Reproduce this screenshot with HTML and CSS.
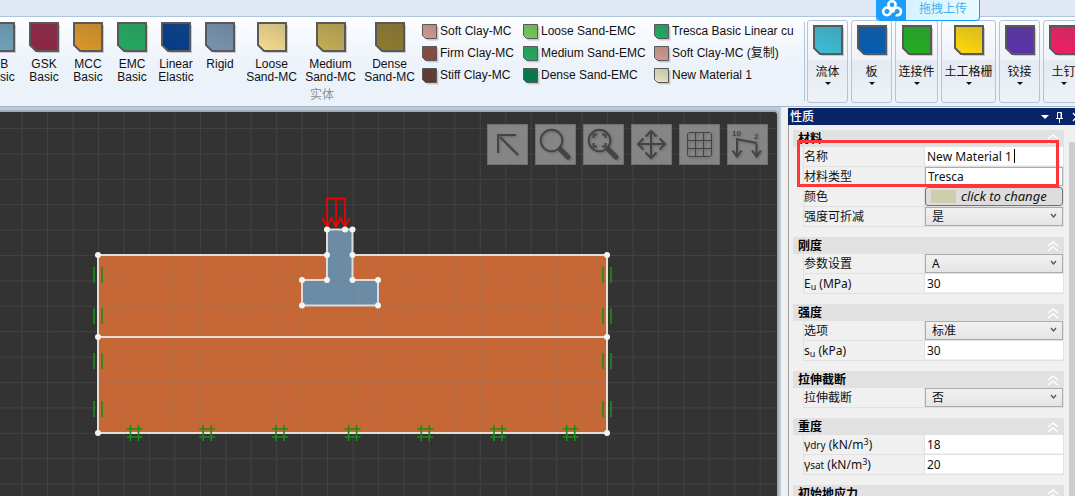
FILE: index.html
```html
<!DOCTYPE html>
<html lang="zh-CN">
<head>
<meta charset="utf-8">
<title>材料性质</title>
<link rel="stylesheet" href="styles.css">
</head>
<body>
<div class="strip"></div>
<header class="ribbon" id="ribbon"></header>
<button class="upload" type="button">
  <span class="upload-logo"><svg width="22" height="18" viewBox="0 0 22 18" fill="none" stroke="#fff" stroke-width="2.600"><circle cx="11" cy="4.800" r="3.600"/><circle cx="6" cy="11.400" r="3.800"/><path d="M12.500 12.500a3.800 3.800 0 1 1 2.200 2.500M8 14.500l5-6"/></svg></span>
  <span class="upload-text">拖拽上传</span>
</button>
<main class="work">
  <section class="canvas">
    <svg class="drawing" width="100%" height="100%" id="drawing"></svg>
    <div class="tools">
      <button class="tool" type="button" aria-label="选择"><svg viewBox="0 0 41 41"><path d="M11 29V11h18M13 13l18 18"/></svg></button>
      <button class="tool" type="button" aria-label="缩放"><svg viewBox="0 0 41 41"><circle cx="16.500" cy="16.500" r="10.800"/><path class="thick" d="M25 25l8 8"/></svg></button>
      <button class="tool" type="button" aria-label="全部显示"><svg viewBox="0 0 41 41"><circle cx="16.500" cy="16.500" r="10.800"/><path d="M10.500 14v-3.500H14M19 10.500h3.500V14M22.500 19v3.500H19M14 22.500h-3.500V19"/><path class="thick" d="M25 25l8 8"/></svg></button>
      <button class="tool" type="button" aria-label="平移"><svg viewBox="0 0 41 41"><path d="M20 7v27M7 20h27M14.500 12.500L20 7l5.500 5.500M14.500 28.500L20 34l5.500-5.500M12.500 14.500L7 20l5.500 5.500M28.500 14.500L34 20l-5.500 5.500"/></svg></button>
      <button class="tool" type="button" aria-label="网格"><svg viewBox="0 0 41 41"><path class="thin" d="M10 8.500h21l1.500 1.500v21L31 32.500H10L8.500 31V10zM16.500 8.500v24M24.500 8.500v24M8.500 16.500h24M8.500 24.500h24"/></svg></button>
      <button class="tool" type="button" aria-label="荷载"><svg viewBox="0 0 41 41"><path d="M9 15l21 4M10 16v16M5.500 26.500l4.500 6 4.500-6M29.500 20v12M25 26.500l4.500 6 4.500-6"/><text x="5" y="12">10</text><text x="27" y="15">2</text></svg></button>
    </div>
  </section>
  <aside class="panel">
    <div class="title"><h1>性质</h1>
      <svg width="42" height="14" viewBox="0 0 42 14" fill="none" stroke="#fff"><path d="M4 5h8l-4 4z" fill="#fff" stroke="none"/><path d="M20.500 2.500h4v6h-4zM24 2.500v6M19 8.500h7M22.500 9v4"/><path d="M36 3l7 8M43 3l-7 8" stroke-width="1.400"/></svg>
    </div>
    <div class="panel-body">
      <form class="props" id="props"></form>
      <div class="scroll"><div class="thumb"></div></div>
      <div class="mark"></div>
    </div>
  </aside>
</main>
<script src="app.js"></script>
</body>
</html>
```
FILE: styles.css
```css
* { box-sizing: border-box; }
body { margin: 0; height: 100vh; display: flex; flex-direction: column; overflow: hidden; background: #b6cce6; font: 12px/13px "Liberation Sans", "Noto Sans CJK SC", sans-serif; color: #111; }
button, input, select { font: inherit; color: inherit; margin: 0; }
button { border: 0; padding: 0; background: none; }
.strip { flex: none; height: 16px; background: #dfe8f4; }
.ribbon { flex: none; display: flex; height: 91px; border-top: 1px solid #b0c6de; border-bottom: 1px solid #a6b5c6; background: linear-gradient(#fdfeff, #ecf2fa 55%, #ecf2fa); }
.solid { flex: none; margin: 5px 0; margin-left: -160px; width: 965px; padding-left: 138px; border-right: 1px solid #b4c6dc; }
.row { display: flex; height: 66px; }
.big { flex: none; display: flex; flex-direction: column; align-items: center; gap: 6px; width: 44px; }
.big.wide { width: 59px; }
.big svg, .small svg, .cat svg { display: block; overflow: visible; flex: none; }
.list { display: grid; grid-template-columns: 101px 131px auto; grid-auto-rows: 22px; align-items: start; margin-left: 3px; }
.small { display: flex; gap: 3px; align-items: center; white-space: nowrap; line-height: 18px; height: 18px; }
.caption { margin-left: -138px; text-align: center; color: #8a8f96; line-height: 14px; }
.cats { display: flex; gap: 3px; margin: 3px 0 3px 2px; }
.cat { flex: none; display: flex; flex-direction: column; align-items: center; justify-content: flex-start; width: 41px; padding-top: 4px; border: 1px solid #b2c5dc; border-radius: 3px; background: linear-gradient(#fafcfe, #eef2f8 48%, #e5eaf2 49%, #edf2f8); white-space: nowrap; }
.cat span { margin-top: 9px; line-height: 16px; }
.cat i { margin-top: 2px; border: 3px solid transparent; border-top-color: #111; border-bottom: 0; }
.w43 { width: 43px; }
.w55 { width: 55px; }
.upload { position: absolute; left: 876px; top: 0; display: flex; height: 21px; border: 1px solid #1c9dfd; border-top: 0; border-radius: 0 0 4px 4px; overflow: hidden; background: linear-gradient(90deg, #cdefff, #e6fbff); }
.upload-logo { width: 29px; height: 20px; padding: 0 3px; background: #1c9dfd; }
.upload-text { padding: 0 12px 0 13px; line-height: 18px; color: #4aaef2; }
.work { flex: 1; min-height: 0; display: grid; grid-template-columns: 1fr 296px; }
.canvas { position: relative; margin-top: 3px; border: solid #ababab; border-width: 2px 2px 0 0; border-radius: 0 5px 0 0; background: #333; overflow: hidden; }
.drawing { display: block; }
.tools { position: absolute; right: 9px; top: 12px; display: flex; gap: 7px; }
.tool { width: 41px; height: 41px; background: rgba(148, 148, 148, .85); border: 1px solid #707070; }
.tool svg { display: block; margin: -1px; width: 41px; height: 41px; fill: none; stroke: #444; stroke-width: 2; filter: drop-shadow(1px 1px 1px #666); }
.tool .thick { stroke-width: 5; stroke-linecap: round; }
.tool .thin { stroke-width: 1; }
.tool text { fill: #444; stroke: none; font: bold 8px "Liberation Sans", sans-serif; }
.panel { display: flex; flex-direction: column; margin-left: 2px; padding: 1px 0 0 7px; background: #f0f0f0; font-family: "Noto Sans", "Noto Sans CJK SC", sans-serif; min-height: 0; }
.title { flex: none; display: flex; justify-content: space-between; align-items: center; height: 17px; padding-left: 2px; background: #0a246a; color: #fff; overflow: hidden; }
.title h1 { margin: 0; font-size: 12px; line-height: 16px; font-weight: 500; }
.title svg { flex: none; margin-right: -4px; }
.panel-body { position: relative; flex: 1; min-height: 0; display: flex; gap: 5px; border-left: 1px solid #a0a0a0; overflow: hidden; }
.props { flex: 1; padding: 5px 0 0 4px; }
.group { margin: 0 0 10px; padding: 0; border: 0; }
.head { display: flex; justify-content: space-between; align-items: center; height: 17px; padding: 0 5px; background: #e1e1e1; color: #000; font-weight: bold; }
.head h2 { margin: 0; font-size: 12px; line-height: 17px; }
.prop { display: grid; grid-template-columns: 121px 1fr; height: 20px; margin-left: 10px; border: solid #e1e1e1; border-width: 0 1px 1px; }
.prop label { line-height: 20px; white-space: nowrap; border-right: 1px solid #e1e1e1; }
.prop sub { font-size: 9px; line-height: 0; vertical-align: -2px; }
.prop sub.base { font-size: 10px; vertical-align: baseline; }
.prop sup { font-size: 9px; line-height: 0; vertical-align: 4px; }
.prop input { width: 100%; min-width: 0; height: 18px; border: 0; padding: 0 2px; background: #fff; outline: none; }
.prop input.boxed { height: 19px; border: 1px solid #ababab; }
.edit { position: relative; }
.edit input { display: block; }
.caret { position: absolute; left: 89px; top: 2px; width: 1px; height: 14px; background: #000; }
.pick { position: relative; }
.pick select { display: block; width: 100%; height: 19px; appearance: none; border: 1px solid #acacac; border-radius: 0; padding: 0 6px; line-height: 16px; background: linear-gradient(#f1f1f1, #e5e5e5); }
.pick svg { position: absolute; right: 6px; top: 6px; pointer-events: none; }
.color { display: flex; align-items: center; gap: 5px; height: 19px; padding: 0 5px; border: 1px solid #707070; border-radius: 3px; background: #ddd; font-size: 13px; font-style: italic; white-space: nowrap; }
.color span { width: 25px; height: 13px; background: #d0cdac; }
.scroll { width: 6px; padding-top: 17px; background: #f0f0f0; }
.thumb { height: 100%; background: #cdcdcd; }
.mark { position: absolute; left: 8px; top: 15px; width: 262px; height: 47px; border: 3px solid #fd3737; pointer-events: none; }
```
FILE: app.js
```js
let seq = 0;
function swatch(size, color) {
  const id = "shade" + seq++;
  const cut = size > 20 ? 6 : 3;
  const w = size > 20 ? 2 : 1;
  const a = w / 2, b = size - w / 2;
  const shape = `M${a} ${a}H${b}V${b}H${a + cut}L${a} ${b - cut}z`;
  return `<svg width="${size}" height="${size}" aria-hidden="true"><defs><linearGradient id="${id}" x1=".7" y1="0" x2=".3" y2="1"><stop offset="0" stop-color="#555" stop-opacity=".22"/><stop offset="1" stop-color="#555" stop-opacity="0"/></linearGradient></defs><path d="${shape}" transform="translate(2 2)" fill="#c9c9cd"/><path d="${shape}" fill="${color}"/><path d="${shape}" fill="url(#${id})" stroke="#595959" stroke-width="${w}"/></svg>`;
}

const bigs = [["HB<br>Basic", "#6fa3be"], ["GSK<br>Basic", "#8f2444"], ["MCC<br>Basic", "#dc9626"], ["EMC<br>Basic", "#20aa60"], ["Linear<br>Elastic", "#003c8c"], ["Rigid", "#7593b0"],
  ["Loose<br>Sand-MC", "#f2da8c", 1], ["Medium<br>Sand-MC", "#c4ac52", 1], ["Dense<br>Sand-MC", "#8e7a2c", 1]];
const smalls = [["Soft Clay-MC", "#d19990"], ["Loose Sand-EMC", "#78c856"], ["Tresca Basic Linear cu", "#20aa60"],
  ["Firm Clay-MC", "#8a4c40"], ["Medium Sand-EMC", "#20aa60"], ["Soft Clay-MC (复制)", "#d19990"],
  ["Stiff Clay-MC", "#623830"], ["Dense Sand-EMC", "#007c4a"], ["New Material 1", "#e6e2c0"]];
const cats = [["流体", "#3cbcd6", ""], ["板", "#005cb4", ""], ["连接件", "#20b020", "w43"], ["土工格栅", "#ffd80c", "w55"], ["铰接", "#5a30ac", ""], ["土钉", "#f01e64", ""]];

document.getElementById("ribbon").innerHTML =
  `<div class="solid"><div class="row">` +
  bigs.map(b => `<button type="button" class="big${b[2] ? " wide" : ""}">${swatch(30, b[1])}<span>${b[0]}</span></button>`).join("") +
  `<div class="list">` + smalls.map(s => `<button type="button" class="small">${swatch(15, s[1])}<span>${s[0]}</span></button>`).join("") +
  `</div></div><div class="caption">实体</div></div><div class="cats">` +
  cats.map(c => `<button type="button" class="cat ${c[2]}">${swatch(30, c[1])}<span>${c[0]}</span><i></i></button>`).join("") + `</div>`;

const groups = [
  ["材料", [["名称", "edit", "New Material 1"], ["材料类型", "boxed", "Tresca"], ["颜色", "color", "click to change"], ["强度可折减", "select", "是"]]],
  ["刚度", [["参数设置", "select", "A"], ["E<sub>u</sub> (MPa)", "text", "30"]]],
  ["强度", [["选项", "select", "标准"], ["s<sub>u</sub> (kPa)", "text", "30"]]],
  ["拉伸截断", [["拉伸截断", "select", "否"]]],
  ["重度", [["γ<sub class='base'>dry</sub> (kN/m<sup>3</sup>)", "text", "18"], ["γ<sub class='base'>sat</sub> (kN/m<sup>3</sup>)", "text", "20"]]],
  ["初始地应力", []]
];
function field(type, value, id) {
  if (type === "select") return `<div class="pick"><select id="${id}"><option>${value}</option></select><svg width="7" height="6" fill="none" stroke="#555" stroke-width="1.3"><path d="M1 1l2.500 3L6 1"/></svg></div>`;
  if (type === "color") return `<button type="button" class="color" id="${id}"><span></span>${value}</button>`;
  if (type === "edit") return `<div class="edit"><input type="text" id="${id}" value="${value}"><span class="caret"></span></div>`;
  return `<input type="text" id="${id}" class="${type}" value="${value}">`;
}
document.getElementById("props").innerHTML = groups.map((g, i) =>
  `<section class="group"><div class="head"><h2>${g[0]}</h2><svg width="12" height="12" fill="none" stroke="#fff" stroke-width="1.5"><path d="M1 6l5-4 5 4M1 11l5-4 5 4"/></svg></div>` +
  g[1].map((p, j) => `<div class="prop"><label for="f${i}${j}">${p[0]}</label>${field(p[1], p[2], "f" + i + j)}</div>`).join("") + `</section>`).join("");

const dots = [[98, 255], [98, 337], [98, 433], [607, 255], [607, 337], [607, 433], [327, 229.5], [345, 229.5], [352.5, 229.5],
  [327, 255], [352.5, 255], [327, 280], [352.5, 280], [302, 280], [378, 280], [302, 305.5], [378, 305.5]];
let supports = "";
for (const x of [94, 102, 603, 611]) for (const y of [267, 308, 353, 401]) supports += `M${x} ${y}v16`;
for (let i = 0; i < 7; i++) {
  const x = 134.5 + i * 72.7;
  supports += `M${x - 4} 425v16M${x + 4} 425v16M${x - 8} 429h16M${x - 8} 437h16`;
}
const tee = "M327 229.5H352.5V280H378V305.5H302V280H327z";
document.getElementById("drawing").innerHTML =
  `<defs><pattern id="grid" width="25.45" height="25.4" x="98" y="255" patternUnits="userSpaceOnUse"><path d="M0 .5H25.45M.5 0V25.4" stroke="#777" stroke-opacity=".22"/></pattern></defs>
  <g transform="translate(0 -112)"><path d="M98 255H607V433H98z" fill="#c66835"/><path d="${tee}" fill="#6c8ba5"/>
  <rect x="0" y="100" width="100%" height="200%" fill="url(#grid)"/>
  <path d="M98 255H327M352.500 255H607V433H98V255M98 337H607" fill="none" stroke="#e6ddd7" stroke-width="2"/>
  <path d="${tee}" fill="none" stroke="#dcdcdc" stroke-width="2"/>
  <path d="${supports}" stroke="#188e18" stroke-width="1.6"/>
  <path d="M327 227V198.500H345V227M336 198.500V227M322.500 218l4.500 9 4.500-9 4.500 9 4.500-9 4.500 9 4.500-9" fill="none" stroke="#f00" stroke-width="1.5"/>
  ${dots.map(d => `<circle cx="${d[0]}" cy="${d[1]}" r="3" fill="#f4f4f4"/>`).join("")}</g>`;
```
